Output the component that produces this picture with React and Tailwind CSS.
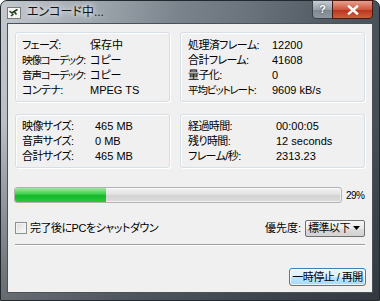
import React from "react";

const FONT = "font-['Liberation_Sans','Noto_Sans_CJK_JP',sans-serif] [font-feature-settings:'palt']";

function Row({ label, value, lw, tight }) {
  return (
    <div className="flex h-[15px] items-center whitespace-nowrap leading-[15px]">
      <div className={"shrink-0 " + (tight ? "text-[10.5px] tracking-[-1.1px] " : "tracking-[-0.6px] ") + lw}>{label}</div>
      <div>{value}</div>
    </div>
  );
}

function Box({ className, children }) {
  return (
    <div className={"rounded-[3px] border border-[#d5dfe5] shadow-[inset_1px_1px_0_#fff,1px_1px_0_#fff] " + className}>
      {children}
    </div>
  );
}

export default function App() {
  return (
    <div className={"w-[380px] h-[301px] overflow-hidden bg-white text-[11px] text-black " + FONT}>
      <div className="flex h-[301px] w-[380px] flex-col rounded-t-[7px] border border-[#23282c] bg-[linear-gradient(to_bottom,rgba(40,45,50,0)_0%,rgba(40,45,50,0)_40%,rgba(40,45,50,0.55)_100%),linear-gradient(100deg,#c3c9cf_0%,#9ea6ae_22%,#7a838b_42%,#6a737b_58%,#545d65_75%,#3f474f_100%)] px-[6px] pb-[7px]">
        {/* Title bar */}
        <div className="relative flex h-[22px] items-center">
          <svg width="14" height="12" viewBox="0 0 14 12" className="mt-[1px]">
            <rect x="0.5" y="0.5" width="13" height="11" fill="#f4f4f4" stroke="#7a7a7a" />
            <path d="M2.5 4 L5 6 L7 4.5 L9.5 7.5 M7 4.5 L10.5 2.5 M4 9 L6.5 7" stroke="#1d3d1d" strokeWidth="1.6" fill="none" />
          </svg>
          <span className="ml-[6px] whitespace-nowrap text-[12px] text-[#111] [text-shadow:0_0_5px_#fff,0_0_8px_#fff]">エンコード中...</span>
          <div className="absolute right-0 top-[-1px] flex">
            <div className="flex h-[19px] w-[21px] items-center justify-center rounded-bl-[4px] border border-[#3a4148] bg-[linear-gradient(to_bottom,#c5ccd3,#98a2ab_50%,#7d8791_51%,#8e98a1)] text-[11px] font-bold text-white [text-shadow:0_0_2px_#333]">
              ?
            </div>
            <div className="-ml-px flex h-[19px] w-[41px] items-center justify-center rounded-br-[4px] border border-[#4a1b14] bg-[linear-gradient(to_bottom,#e6a08e,#d0573f_50%,#b8321c_51%,#d0603f)]">
              <svg width="12" height="10" viewBox="0 0 12 10">
                <path d="M2 1.5 L10 8.5 M10 1.5 L2 8.5" stroke="#fff" strokeWidth="2.4" strokeLinecap="square" />
              </svg>
            </div>
          </div>
        </div>

        {/* Client area */}
        <div className="flex h-[270px] flex-col border border-[#4a5157] bg-[#f0f0f0]">
          <div className="grid grid-cols-[155px_185px] gap-x-[10px] px-[7px] pt-[8px]">
            <Box className="h-[70px] pl-[6px] pt-[5px]">
              <Row label="フェーズ:" value="保存中" lw="w-[68px]" />
              <Row label="映像コーデック:" value="コピー" lw="w-[68px]" tight />
              <Row label="音声コーデック:" value="コピー" lw="w-[68px]" tight />
              <Row label="コンテナ:" value="MPEG TS" lw="w-[68px]" />
            </Box>
            <Box className="h-[70px] pl-[7px] pt-[5px]">
              <Row label="処理済フレーム:" value="12200" lw="w-[84px]" />
              <Row label="合計フレーム:" value="41608" lw="w-[84px]" />
              <Row label="量子化:" value="0" lw="w-[84px]" />
              <Row label="平均ビットレート:" value="9609 kB/s" lw="w-[84px]" tight />
            </Box>
            <Box className="mt-[12px] h-[54px] pl-[6px] pt-[4px]">
              <Row label="映像サイズ:" value="465 MB" lw="w-[73px]" />
              <Row label="音声サイズ:" value="0 MB" lw="w-[73px]" />
              <Row label="合計サイズ:" value="465 MB" lw="w-[73px]" />
            </Box>
            <Box className="mt-[12px] h-[54px] pl-[7px] pt-[4px]">
              <Row label="経過時間:" value="00:00:05" lw="w-[88px]" />
              <Row label="残り時間:" value="12 seconds" lw="w-[88px]" />
              <Row label="フレーム/秒:" value="2313.23" lw="w-[88px]" />
            </Box>
          </div>

          {/* Progress */}
          <div className="mt-[19px] flex items-center pl-[6px]">
            <div className="h-[16px] w-[328px] overflow-hidden rounded-[3px] border border-[#b2b2b2] bg-[linear-gradient(to_bottom,#f2f2f2,#e2e2e2_45%,#d2d2d2_55%,#dcdcdc)] shadow-[inset_0_0_0_1px_rgba(255,255,255,0.6)]">
              <div className="h-full w-[28%] bg-[linear-gradient(to_bottom,#9fe89f,#45d353_40%,#12b82a_55%,#2ec840)]" />
            </div>
            <span className="ml-[4px] text-[10px] tracking-[-0.5px]">29%</span>
          </div>

          {/* Options */}
          <div className="mt-[15px] flex h-[20px] items-center whitespace-nowrap px-[7px]">
            <div className="h-[12px] w-[12px] shrink-0 border border-[#8e8f8f] bg-[linear-gradient(135deg,#dcdcdc,#fbfbfb)] shadow-[inset_0_0_0_1px_#f4f4f4]" />
            <span className="ml-[3px] tracking-[-0.5px]">完了後にPCをシャットダウン</span>
            <span className="ml-auto">優先度:</span>
            <div className="ml-[4px] flex h-[17px] w-[60px] shrink-0 items-center rounded-[2px] border border-[#707070] bg-[linear-gradient(to_bottom,#f6f6f6,#e9e9e9_50%,#dcdcdc_51%,#d2d2d2)] pl-[2px] pr-[4px]">
              <span className="leading-none tracking-[-0.5px]">標準以下</span>
              <svg width="7" height="4" viewBox="0 0 7 4" className="ml-auto shrink-0">
                <path d="M0 0 H7 L3.5 4 Z" fill="#000" />
              </svg>
            </div>
          </div>

          {/* Separator */}
          <div className="mx-[7px] mt-[6px] h-[2px] border-t border-b border-t-[#a0a0a0] border-b-white" />

          {/* Button */}
          <div className="mt-[22px] flex justify-end pr-[6px]">
            <div className="flex h-[18px] w-[77px] items-center justify-center whitespace-nowrap rounded-[3px] border border-[#3c7fb1] bg-[linear-gradient(to_bottom,#eaf6fd,#d9f0fc_50%,#bee6fd_51%,#a7d9f5)] tracking-[-0.5px] shadow-[inset_0_0_0_1px_rgba(255,255,255,0.7)]">
              一時停止 / 再開
            </div>
          </div>
        </div>
      </div>
    </div>
  );
}
